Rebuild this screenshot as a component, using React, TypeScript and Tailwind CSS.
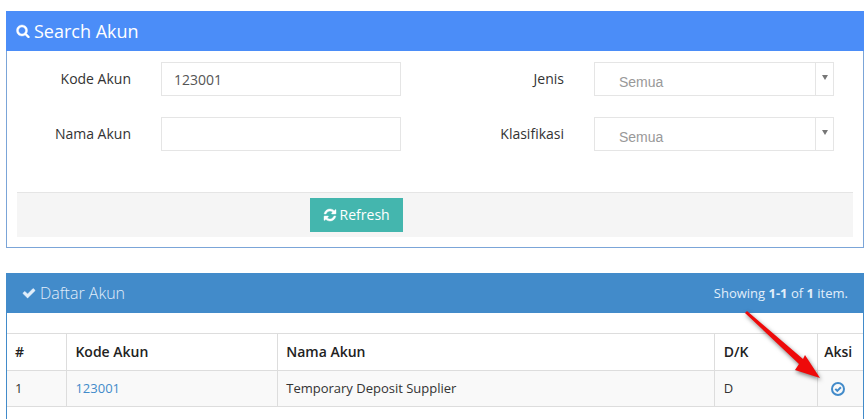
import { useState } from "react";
import type { ReactNode } from "react";

const icons = {
  search:
    "M1216 832q0-185-131.5-316.5t-316.5-131.5-316.5 131.5-131.5 316.5 131.5 316.5 316.5 131.5 316.5-131.5 131.5-316.5zm512 832q0 52-38 90t-90 38q-54 0-90-38l-343-342q-179 124-399 124-143 0-273.5-55.5t-225-150-150-225-55.5-273.5 55.5-273.5 150-225 225-150 273.5-55.5 273.5 55.5 225 150 150 225 55.5 273.5q0 220-124 399l343 343q37 37 37 90z",
  refresh:
    "M1639 1056q0 5-1 7-64 268-268 434.5t-478 166.5q-146 0-282.5-55t-243.5-157l-129 129q-19 19-45 19t-45-19-19-45v-448q0-26 19-45t45-19h448q26 0 45 19t19 45-19 45l-137 137q71 66 161 102t187 36q134 0 250-65t186-179q11-17 53-117 8-23 30-23h192q13 0 22.5 9.5t9.5 22.5zm25-800v448q0 26-19 45t-45 19h-448q-26 0-45-19t-19-45 19-45l138-138q-148-137-349-137-134 0-250 65t-186 179q-11 17-53 117-8 23-30 23h-199q-13 0-22.5-9.5t-9.5-22.5v-7q65-268 270-434.5t480-166.5q146 0 284 55.5t245 156.5l130-129q19-19 45-19t45 19 19 45z",
  check:
    "M1671 566q0 40-28 68l-724 724-136 136q-28 28-68 28t-68-28l-136-136-362-362q-28-28-28-68t28-68l136-136q28-28 68-28t68 28l294 295 656-657q28-28 68-28t68 28l136 136q28 28 28 68z",
};

const Icon = ({ name, className }: { name: keyof typeof icons; className: string }) => (
  <svg viewBox="0 0 1792 1792" fill="currentColor" stroke="currentColor" strokeWidth="50" aria-hidden="true" className={className}>
    <path d={icons[name]} />
  </svg>
);

const Field = ({ id, label, children }: { id: string; label: string; children: ReactNode }) => (
  <div className="flex items-center">
    <label htmlFor={id} className="flex-1 pr-[30px] text-right">
      {label}
    </label>
    <div className="w-5/8">{children}</div>
  </div>
);

const TextField = ({ id, label, initial }: { id: string; label: string; initial: string }) => {
  const [value, setValue] = useState(initial);

  return (
    <Field id={id} label={label}>
      <input
        id={id}
        type="text"
        value={value}
        onChange={(e) => setValue(e.target.value)}
        className="block h-[34px] w-full border border-[#e5e5e5] bg-white px-3 text-sm text-[#555] outline-none focus:border-[#999]"
      />
    </Field>
  );
};

const SelectField = ({ id, label }: { id: string; label: string }) => (
  <Field id={id} label={label}>
    <div className="relative">
      <select
        id={id}
        className="block h-[34px] w-full appearance-none rounded-none border border-[#e5e5e5] bg-white pt-[6px] pr-6 pl-6 font-['Liberation_Sans',sans-serif] text-sm text-[#999] outline-none"
      >
        <option>Semua</option>
      </select>
      {/* arrow box */}
      <span className="pointer-events-none absolute inset-y-0 right-0 flex w-[19px] justify-center border border-[#e5e5e5] pt-3">
        <svg viewBox="0 0 6 5" className="h-[5px] w-[6px] fill-[#777]" aria-hidden="true">
          <path d="M0 0h6L3 5z" />
        </svg>
      </span>
    </div>
  </Field>
);

const accounts = [{ code: "123001", name: "Temporary Deposit Supplier", dk: "D" }];

const App = () => {
  return (
    <div className="flex min-h-screen flex-col gap-[25px] bg-white pt-[11px] pr-[3px] pl-[6px] font-['Open_Sans',sans-serif] text-sm text-[#333]">
      {/* Search form */}
      <section className="border border-t-0 border-[#7ba5d8]">
        <h2 className="-mx-px flex h-10 items-center gap-1 bg-[#4b8df8] px-[10px] text-lg text-white">
          <Icon name="search" className="size-[14px]" />
          Search Akun
        </h2>
        <form className="px-[10px] pt-[11px] pb-[10px]" onSubmit={(e) => e.preventDefault()}>
          <div className="grid grid-cols-2 gap-x-[49px] gap-y-[21px] pr-[19px]">
            <TextField id="kode" label="Kode Akun" initial="123001" />
            <SelectField id="jenis" label="Jenis" />
            <TextField id="nama" label="Nama Akun" initial="" />
            <SelectField id="klasifikasi" label="Klasifikasi" />
          </div>
          <div className="mt-[41px] border-t border-[#e5e5e5] bg-[#f5f5f5] py-[5px] pl-[35%]">
            <button
              type="submit"
              className="flex h-[34px] items-center gap-[3px] bg-[#44b6ae] px-[13px] text-sm text-white hover:bg-[#3ea49d]"
            >
              <Icon name="refresh" className="size-[14px]" />
              Refresh
            </button>
          </div>
        </form>
      </section>

      {/* Account list */}
      <section className="relative flex-1 border-x border-[#428bca]">
        <div className="-mx-px flex h-10 items-center justify-between bg-[#428bca] px-4 text-[#e1eefa]">
          <h2 className="flex items-center gap-1 text-base font-light">
            <Icon name="check" className="size-[14px]" />
            Daftar Akun
          </h2>
          <p className="text-[13px]">
            Showing <b>1-1</b> of <b>1</b> item.
          </p>
        </div>
        <table className="mt-5 w-full table-fixed border-collapse">
          <thead>
            <tr className="h-[37px] border-y border-[#ddd] text-left text-[#222]">
              <th className="w-[7%] px-2 font-semibold">#</th>
              <th className="border-l border-[#ddd] px-2 font-semibold">Kode Akun</th>
              <th className="w-[51%] border-l border-[#ddd] px-2 font-semibold">Nama Akun</th>
              <th className="w-[12%] border-l border-[#ddd] px-[9px] font-semibold">D/K</th>
              <th className="w-[46px] border-l border-[#ddd] pr-1 text-center font-semibold">Aksi</th>
            </tr>
          </thead>
          <tbody>
            {accounts.map((account, index) => (
              <tr key={account.code} className="h-9 border-b border-[#ddd] bg-[#f9f9f9] text-[13px]">
                <td className="px-2">{index + 1}</td>
                <td className="border-l border-[#ddd] px-2">
                  <a href="#detail" className="text-[#428bca] hover:underline">
                    {account.code}
                  </a>
                </td>
                <td className="border-l border-[#ddd] px-2">{account.name}</td>
                <td className="border-l border-[#ddd] px-[9px]">{account.dk}</td>
                <td className="border-l border-[#ddd] pr-1">
                  <a href="#pilih" aria-label="Pilih akun" className="flex justify-center text-[#428bca]">
                    <svg viewBox="0 0 14 14" className="size-[14px]" fill="none" stroke="currentColor" aria-hidden="true">
                      <circle cx="7" cy="7" r="6" strokeWidth="2" />
                      <path d="M4.3 6.9l2 2 3.6-3.6" strokeWidth="2" />
                    </svg>
                  </a>
                </td>
              </tr>
            ))}
          </tbody>
        </table>

        {/* Pointer to the action link */}
        <svg
          viewBox="0 0 84 76"
          aria-hidden="true"
          className="pointer-events-none absolute top-9 right-9 h-[76px] w-[84px] drop-shadow-[1px_2px_2px_rgba(0,0,0,0.5)]"
        >
          <path d="M2 4L4 2L60 50L62 46L77 69L52 61L56 55Z" fill="#ee0a0a" />
        </svg>
      </section>
    </div>
  );
};

export default App;
